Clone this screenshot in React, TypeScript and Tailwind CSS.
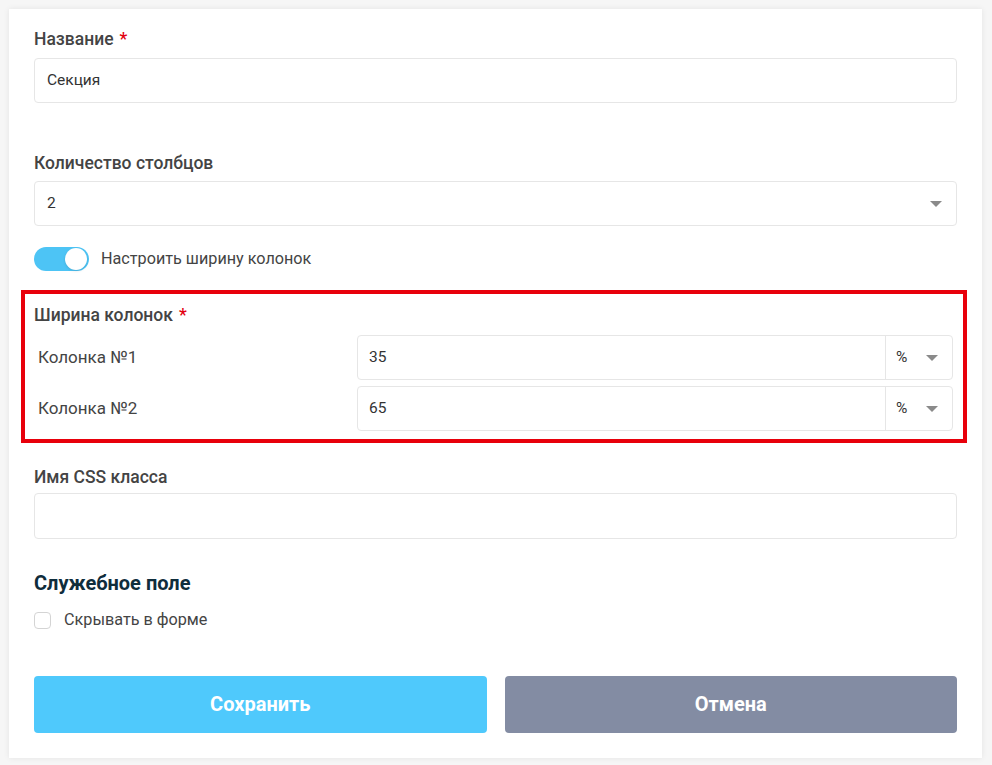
import { useState } from "react";

function Caret() {
  return (
    <svg width="12" height="6" viewBox="0 0 12 6" className="shrink-0">
      <path d="M0 0h12L6 6z" fill="#8a8a8a" />
    </svg>
  );
}

function Label({ text, required }: { text: string; required?: boolean }) {
  return (
    <div className="h-5 text-[17.5px] leading-5 font-medium text-[#444]">
      {text}
      {required && <span className="ml-1.5 text-[#e3000f]">*</span>}
    </div>
  );
}

function WidthRow({ name, value }: { name: string; value: string }) {
  return (
    <div className="flex items-center">
      <div className="w-[323px] pl-1 text-[17px] text-[#444]">{name}</div>
      <div className="flex h-[45px] flex-1 rounded border border-[#e6e6e6] bg-white">
        <div className="flex flex-1 items-center pl-[11px] text-[15.5px] text-[#333]">{value}</div>
        <div className="flex w-[67px] items-center justify-between border-l border-[#e6e6e6] pl-[10px] pr-[14px] text-[15.5px] text-[#333]">
          %
          <Caret />
        </div>
      </div>
    </div>
  );
}

export default function App() {
  const [custom, setCustom] = useState(true);
  const [hidden, setHidden] = useState(false);

  return (
    <div className="min-h-[765px] bg-[#f6f6f6] p-[9px] font-['Roboto','Liberation_Sans',sans-serif]">
      <div className="h-[749px] w-[973px] bg-white px-[25px] pt-5 shadow-[0_0_6px_rgba(0,0,0,0.08)]">
        <Label text="Название" required />
        <div className="mt-[9px] flex h-[45px] items-center rounded border border-[#e6e6e6] pl-3 text-[15.5px] text-[#333]">
          Секция
        </div>

        <div className="mt-[50px]">
          <Label text="Количество столбцов" />
        </div>
        <div className="mt-2 flex h-[45px] items-center justify-between rounded border border-[#e6e6e6] pl-3 pr-[14px] text-[15.5px] text-[#333]">
          2
          <Caret />
        </div>

        <div className="mt-[21px] flex items-center">
          <button
            onClick={() => setCustom(!custom)}
            className={`relative h-6 w-[55px] rounded-full ${custom ? "bg-[#4dc4f5]" : "bg-[#ccc]"}`}
          >
            <span
              className={`absolute top-[1px] h-[22px] w-[22px] rounded-full bg-white shadow ${custom ? "left-[31px]" : "left-[1px]"}`}
            />
          </button>
          <span className="ml-3 text-[16.2px] text-[#444]">Настроить ширину колонок</span>
        </div>

        <div className="ml-[-13px] mr-[-10px] mt-[19px] border-4 border-[#e8000b] pb-2 pl-[9px] pr-[10px] pt-[11px]">
          <Label text="Ширина колонок" required />
          <div className="mt-[10px] flex flex-col gap-[6px]">
            <WidthRow name="Колонка №1" value="35" />
            <WidthRow name="Колонка №2" value="65" />
          </div>
        </div>

        <div className="mt-6">
          <Label text="Имя CSS класса" />
        </div>
        <div className="mt-[6px] h-[46px] rounded border border-[#e6e6e6]" />

        <div className="mt-[33px] text-[20px] font-bold leading-[22px] text-[#0f2d3c]">Служебное поле</div>
        <label className="mt-[14px] flex items-center">
          <button
            onClick={() => setHidden(!hidden)}
            className={`h-[17px] w-[17px] rounded border ${hidden ? "border-[#4dc4f5] bg-[#4dc4f5]" : "border-[#d4d4d4] bg-white"}`}
          />
          <span className="ml-[13px] text-[16.2px] text-[#444]">Скрывать в форме</span>
        </label>

        <div className="mt-[43px] flex gap-[18px]">
          <button className="h-[57px] flex-1 rounded bg-[#4fc9fc] text-[20px] font-bold text-white">Сохранить</button>
          <button className="h-[57px] flex-1 rounded bg-[#838ca3] text-[20px] font-bold text-white">Отмена</button>
        </div>
      </div>
    </div>
  );
}
